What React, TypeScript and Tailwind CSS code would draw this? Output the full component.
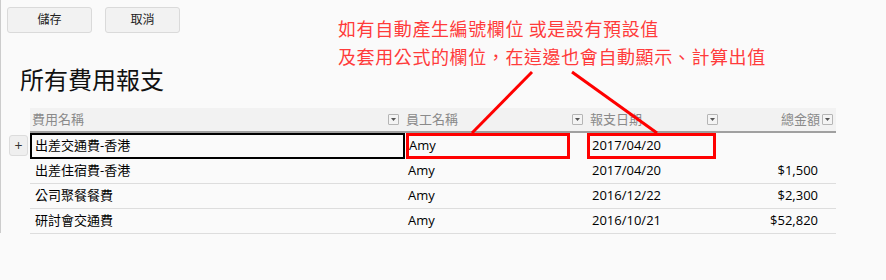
import React from "react";

const FONT = { fontFamily: '"Open Sans", "Noto Sans CJK TC", sans-serif' };

function Dd() {
  return (
    <span className="inline-flex h-[11px] w-[11px] shrink-0 items-center justify-center rounded-[1px] border border-[#b5b5b5] bg-[#f4f4f4]">
      <svg width="5" height="3" viewBox="0 0 5 3">
        <path d="M0 0 L5 0 L2.5 3 Z" fill="#555" />
      </svg>
    </span>
  );
}

const rows = [
  { name: "出差住宿費-香港", emp: "Amy", date: "2017/04/20", amt: "$1,500" },
  { name: "公司聚餐餐費", emp: "Amy", date: "2016/12/22", amt: "$2,300" },
  { name: "研討會交通費", emp: "Amy", date: "2016/10/21", amt: "$52,820" },
];

export default function App() {
  return (
    <div className="relative h-[280px] w-[886px] overflow-hidden bg-[#fafafa] text-black" style={FONT}>
      <div className="h-[233px] border-l border-[#cccccc] pl-[6px] pt-[7px]">
        <div className="flex gap-[13px]">
          <button className="h-[26px] w-[85px] rounded-[3px] border border-[#dadada] bg-[#f2f2f2] text-[12px] text-[#222]">儲存</button>
          <button className="h-[26px] w-[75px] rounded-[3px] border border-[#dadada] bg-[#f2f2f2] text-[12px] text-[#222]">取消</button>
        </div>
        <div className="ml-[13px] mt-[31px] text-[24px] leading-[32px] text-[#111]">所有費用報支</div>
        <div className="ml-[23px] mt-[12px] w-[806px]">
          <div className="flex h-[25px] items-center border-b-2 border-[#a0a0a0] bg-[#f2f2f2] text-[13px] text-[#8a8a8a]">
            <div className="flex w-[372px] items-center justify-between pl-[2px] pr-[3px]">
              <span>費用名稱</span>
              <Dd />
            </div>
            <div className="flex w-[184px] items-center justify-between pl-[3px] pr-[3px]">
              <span className="ml-[1px]">員工名稱</span>
              <Dd />
            </div>
            <div className="flex w-[135px] items-center justify-between pl-[4px] pr-[3px]">
              <span>報支日期</span>
              <Dd />
            </div>
            <div className="flex w-[115px] items-center justify-end gap-[2px] pr-[3px]">
              <span>總金額</span>
              <Dd />
            </div>
          </div>
          <div className="relative flex h-[26px] items-stretch text-[13px]">
            <div className="absolute left-[-21px] top-[2px] flex h-[21px] w-[19px] items-center justify-center rounded-[3px] border border-[#dcdcdc] bg-[#efefef] text-[14px] text-[#333]">+</div>
            <div className="flex w-[375px] items-center border-2 border-black pl-[3px]">出差交通費-香港</div>
            <div className="ml-[1px] flex w-[164px] items-center border-[3px] border-[#ff0000]">Amy</div>
            <div className="ml-[17px] flex w-[129px] items-center border-[3px] border-[#ff0000] pl-[2px]">2017/04/20</div>
          </div>
          {rows.map((r) => (
            <div key={r.name} className="flex h-[25px] items-center border-b border-[#dddddd] text-[13px]">
              <div className="w-[375px] pl-[5px]">{r.name}</div>
              <div className="w-[182px] pl-[3px]">{r.emp}</div>
              <div className="w-[131px] pl-[5px]">{r.date}</div>
              <div className="w-[118px] pr-[18px] text-right">{r.amt}</div>
            </div>
          ))}
        </div>
      </div>

      <div
        className="absolute left-[338px] top-[14px] text-[18px] leading-[28px] tracking-[0.6px] text-[#ff3b3b]"
        style={{ fontFamily: '"Noto Sans CJK TC", sans-serif' }}
      >
        <div>如有自動產生編號欄位 或是設有預設值</div>
        <div>及套用公式的欄位，在這邊也會自動顯示、計算出值</div>
      </div>

      <svg className="pointer-events-none absolute left-0 top-0" width="886" height="280">
        <line x1="532" y1="72" x2="472" y2="133" stroke="#ff0000" strokeWidth="3" />
        <line x1="572" y1="72" x2="657" y2="133" stroke="#ff0000" strokeWidth="3" />
      </svg>
    </div>
  );
}
